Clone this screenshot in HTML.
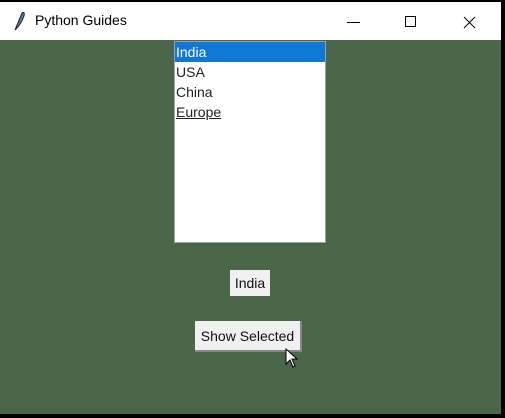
<!DOCTYPE html>
<html><head><style>
body{margin:0;width:505px;height:418px;background:#000;position:relative;overflow:hidden;font-family:"Liberation Sans",sans-serif;}
.title{position:absolute;left:0;top:2px;width:501px;height:38px;background:#fff;}
.title span{position:absolute;left:35px;top:10px;font-size:14px;color:#000;}
.body{position:absolute;left:0;top:40px;width:501px;height:374px;background:#4a6849;}
.lb{position:absolute;left:174px;top:41px;width:150px;height:200px;background:#fff;border:1px solid #a0a0a0;font-size:14px;color:#222;}
.lb div{height:20px;line-height:20px;padding-left:1px;}
.sel{background:#0f78d7;color:#fff;}
.lab{position:absolute;left:230px;top:270px;width:40px;height:26px;background:#f0f0f0;font-size:14px;line-height:26px;text-align:center;color:#111;}
.btn{position:absolute;left:195px;top:321px;width:105px;height:29px;background:#f0f0f0;border-right:2px solid #888;border-bottom:2px solid #888;font-size:14px;line-height:30px;text-align:center;color:#111;}
</style></head><body>
<div class="title">
<svg style="position:absolute;left:12px;top:8px" width="14" height="22" viewBox="0 0 14 22"><path d="M3 20 L10 3 Q13 1 12 6 Q9 14 5 18 Z" fill="#4a7aa8" stroke="#223" stroke-width="1"/></svg>
<span>Python Guides</span>
<svg style="position:absolute;left:340px;top:12px" width="150" height="16" viewBox="0 0 150 16"><path d="M7 8.5H20" stroke="#000"/><rect x="65.5" y="2.5" width="10" height="10" fill="none" stroke="#000"/><path d="M124 3L135 14M135 3L124 14" stroke="#000"/></svg>
</div>
<div class="body"></div>
<div class="lb"><div class="sel">India</div><div>USA</div><div>China</div><div style="text-decoration:underline">Europe</div></div>
<div class="lab">India</div>
<div class="btn">Show Selected</div>
<svg style="position:absolute;left:285px;top:348px" width="14" height="20" viewBox="0 0 14 20"><path d="M1 1V16L5 12L8 19L10 18L7 11H12Z" fill="#fff" stroke="#000"/></svg>
</body></html>
